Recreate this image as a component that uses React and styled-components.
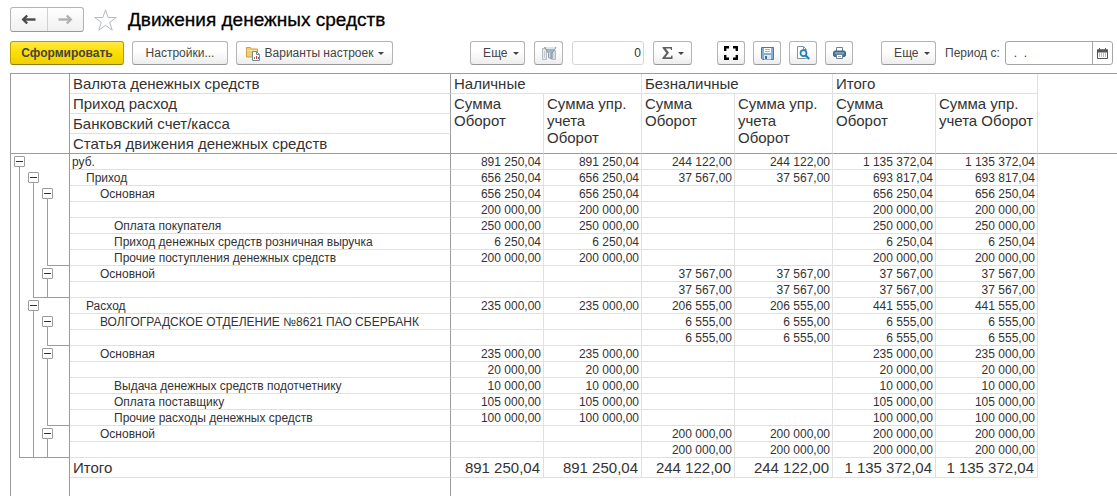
import React, { useState } from 'react'
import styled, { createGlobalStyle } from 'styled-components'

const GlobalStyle = createGlobalStyle`
    * {
        box-sizing: border-box;
    }
    body {
        margin: 0;
        background: #ffffff;
        font-family: "Liberation Sans", Arial, sans-serif;
        color: #333333;
    }
`
const Page = styled.div`
    display: flex;
    flex-direction: column;
    min-height: 100vh;
    padding-left: 10px;
`
const Header = styled.header`
    display: flex;
    align-items: center;
    gap: 9px;
    padding-top: 7px;
`
const NavGroup = styled.div`
    display: flex;
    width: 74px;
    height: 25px;
    border: 1px solid #b4b4b4;
    border-bottom-color: #979797;
    border-radius: 3px;
    background: linear-gradient(#ffffff, #f0f0f0);
`
const NavButton = styled.button`
    flex: 1;
    display: flex;
    align-items: center;
    justify-content: center;
    padding: 0;
    border: none;
    background: transparent;
    color: ${(props) => (props.disabled ? '#b0b0b0' : '#4a4a4a')};

    & + & {
        border-left: 1px solid #d0d0d0;
    }
`
const StarButton = styled.button`
    display: flex;
    padding: 0;
    border: none;
    background: transparent;
`
const Title = styled.h1`
    margin: 0;
    padding-left: 1px;
    font-size: 19px;
    line-height: 24px;
    font-weight: 400;
    color: #000000;
    -webkit-text-stroke: 0.3px #000000;
`
const Toolbar = styled.div`
    display: flex;
    align-items: center;
    padding: 9px 4px 8px 0;
`
const Group = styled.div`
    display: flex;
    flex-shrink: 0;
    align-items: center;
    gap: ${(props) => props.$gap || 8}px;
    margin-left: ${(props) => props.$before || 0}px;
`
const Button = styled.button`
    display: flex;
    align-items: center;
    justify-content: center;
    gap: 4px;
    width: ${(props) => props.$width}px;
    height: 24px;
    padding: 0;
    border: 1px solid #b4b4b4;
    border-bottom-color: #979797;
    border-radius: 3px;
    background: linear-gradient(#ffffff 40%, #ededed);
    font-family: inherit;
    font-size: 12px;
    color: #444444;
    white-space: nowrap;
`
const PrimaryButton = styled(Button)`
    border-color: #b5a000;
    border-bottom-color: #8f7e00;
    background: linear-gradient(#ffe94a, #ffdf00 45%, #efcf00);
    font-weight: 700;
`
const Caret = styled.span`
    margin-left: 1px;
    border: 3px solid transparent;
    border-top-color: #444444;
    border-bottom: none;
`
const NumberInput = styled.input`
    width: 72px;
    height: 24px;
    padding: 0 2px;
    border: 1px solid #d5d5d5;
    border-radius: 3px;
    font-family: inherit;
    font-size: 12px;
    color: #333333;
    text-align: right;
`
const PeriodLabel = styled.label`
    margin-left: 9px;
    font-size: 12px;
    color: #444444;
    white-space: nowrap;
`
const PeriodField = styled.div`
    flex: 1;
    display: flex;
    min-width: 0;
    height: 24px;
    margin-left: 5px;
    border: 1px solid #a5a5a5;
    border-radius: 3px;
`
const PeriodInput = styled.input`
    flex: 1;
    min-width: 0;
    padding: 0 8px;
    border: none;
    background: transparent;
    font-family: inherit;
    font-size: 12px;
    color: #333333;
`
const CalendarButton = styled.button`
    display: flex;
    flex-shrink: 0;
    align-items: center;
    justify-content: center;
    width: 20px;
    padding: 0;
    border: none;
    border-left: 1px solid #a5a5a5;
    background: transparent;
`

const Sheet = styled.main`
    flex: 1;
    display: flex;
    flex-direction: column;
    border-top: 1px solid #9c9c9c;
    border-left: 1px solid #9c9c9c;
`
const Table = styled.table`
    width: 100%;
    table-layout: fixed;
    border-collapse: separate;
    border-spacing: 0;
`
const HeadCell = styled.th`
    height: 20px;
    padding: 1px 3px 0;
    border-right: 1px solid ${(props) => (props.$dark ? '#9c9c9c' : '#e0e0e0')};
    border-bottom: 1px solid ${(props) => (props.$last ? '#9c9c9c' : '#e0e0e0')};
    font-size: 15px;
    line-height: 17px;
    font-weight: 400;
    text-align: left;
    vertical-align: top;
`
const HeadRest = styled.td`
    padding: 0;
    border-bottom: 1px solid #9c9c9c;
`
const TreeCell = styled.td`
    height: ${(props) => props.$height || 16}px;
    padding: 0 0 0 1px;
    border-right: 1px solid #9c9c9c;
`
const TreeSlots = styled.div`
    display: flex;
    height: 16px;
`
const Slot = styled.div`
    display: grid;
    grid-template-columns: 7px 1fr;
    flex: ${(props) => (props.$last ? '1' : '0 0 14px')};
    height: 16px;
`
const SlotLeft = styled.span`
    border-bottom: ${(props) => (props.$closed ? '1px solid #9c9c9c' : 'none')};
`
const SlotRight = styled.span`
    border-left: ${(props) => (props.$line ? '1px solid #9c9c9c' : 'none')};
    border-bottom: ${(props) => (props.$closed ? '1px solid #9c9c9c' : 'none')};
`
const NodeSlot = styled.div`
    display: flex;
    flex-direction: column;
    align-items: center;
    width: 15px;
    height: 16px;
    margin-right: -1px;
    padding-top: 2px;
`
const Toggle = styled.button`
    display: flex;
    align-items: center;
    justify-content: center;
    width: 11px;
    height: 11px;
    padding: 0;
    border: 1px solid #9c9c9c;
    border-radius: 1px;
    background: #ffffff;
`
const Minus = styled.span`
    width: 7px;
    height: 1px;
    background: #333333;
`
const Stem = styled.span`
    flex: 1;
    width: 1px;
    background: #9c9c9c;
`
const LabelCell = styled.th`
    padding: 1px 2px 0 ${(props) => 2 + props.$level * 14}px;
    border-right: 1px solid #9c9c9c;
    border-bottom: 1px solid #e0e0e0;
    font-size: 12px;
    line-height: 14px;
    font-weight: 400;
    text-align: left;
    white-space: nowrap;
`
const NumberCell = styled.td`
    padding: 1px 2px 0 0;
    border-right: 1px solid #e0e0e0;
    border-bottom: 1px solid #e0e0e0;
    font-size: 12px;
    line-height: 14px;
    text-align: right;
    white-space: nowrap;
`
const TotalLabel = styled(LabelCell)`
    padding-left: 3px;
    font-size: 15px;
    line-height: 18px;
`
const TotalNumber = styled(NumberCell)`
    padding-right: 3px;
    font-size: 15px;
    line-height: 18px;
`
const Tail = styled.div`
    flex: 1;
    display: grid;
    grid-template-columns: 59px 381px 1fr;
`
const TailCell = styled.div`
    border-right: 1px solid #9c9c9c;
`

const columnWidths = [59, 381, 93, 98, 93, 98, 103, 102]

const dimensions = ['Приход расход', 'Банковский счет/касса', 'Статья движения денежных средств']

// level 0-2 are groups, level 3 are the detail rows
// sums: [cash, non-cash, total]
const rows = [
    { level: 0, label: 'руб.', sums: ['891 250,04', '244 122,00', '1 135 372,04'] },
    { level: 1, label: 'Приход', sums: ['656 250,04', '37 567,00', '693 817,04'] },
    { level: 2, label: 'Основная', sums: ['656 250,04', '', '656 250,04'] },
    { level: 3, label: '', sums: ['200 000,00', '', '200 000,00'] },
    { level: 3, label: 'Оплата покупателя', sums: ['250 000,00', '', '250 000,00'] },
    { level: 3, label: 'Приход денежных средств розничная выручка', sums: ['6 250,04', '', '6 250,04'] },
    { level: 3, label: 'Прочие поступления денежных средств', sums: ['200 000,00', '', '200 000,00'] },
    { level: 2, label: 'Основной', sums: ['', '37 567,00', '37 567,00'] },
    { level: 3, label: '', sums: ['', '37 567,00', '37 567,00'] },
    { level: 1, label: 'Расход', sums: ['235 000,00', '206 555,00', '441 555,00'] },
    { level: 2, label: 'ВОЛГОГРАДСКОЕ ОТДЕЛЕНИЕ №8621 ПАО СБЕРБАНК', sums: ['', '6 555,00', '6 555,00'] },
    { level: 3, label: '', sums: ['', '6 555,00', '6 555,00'] },
    { level: 2, label: 'Основная', sums: ['235 000,00', '', '235 000,00'] },
    { level: 3, label: '', sums: ['20 000,00', '', '20 000,00'] },
    { level: 3, label: 'Выдача денежных средств подотчетнику', sums: ['10 000,00', '', '10 000,00'] },
    { level: 3, label: 'Оплата поставщику', sums: ['105 000,00', '', '105 000,00'] },
    { level: 3, label: 'Прочие расходы денежных средств', sums: ['100 000,00', '', '100 000,00'] },
    { level: 2, label: 'Основной', sums: ['', '200 000,00', '200 000,00'] },
    { level: 3, label: '', sums: ['', '200 000,00', '200 000,00'] },
]

const totals = ['891 250,04', '244 122,00', '1 135 372,04']

// every sum is shown twice: the plain one and the management accounting one
const double = (sums) => sums.flatMap((sum) => [sum, sum])

const ArrowIcon = ({ flip }) => (
    <svg width="15" height="11" viewBox="0 0 15 11">
        <g transform={flip ? 'matrix(-1 0 0 1 15 0)' : undefined} fill="none" stroke="currentColor" strokeWidth="2.4">
            <path d="M2 5.5H14.5" />
            <path d="M6.2 1.5L2.2 5.5l4 4" />
        </g>
    </svg>
)

const StarIcon = () => (
    <svg width="25" height="24" viewBox="0 0 25 24">
        <path
            d="M12.5 1.8l2.6 7.7h8.2l-6.6 4.9 2.5 7.8-6.7-4.8-6.7 4.8 2.5-7.8-6.6-4.9h8.2z"
            fill="#ffffff" stroke="#b4bac1" />
    </svg>
)

const VariantsIcon = () => (
    <svg width="16" height="16" viewBox="0 0 16 16">
        <path d="M1.5 2.5h4l1 1.5h6v8h-11z" fill="#f2cb73" stroke="#cf9f45" />
        <path d="M2 5.5h10" stroke="#fbe3a0" />
        <path d="M7.5 6.5h4l3 3v6h-7z" fill="#ffffff" stroke="#7a8796" />
        <path d="M11.5 6.5v3h3" fill="none" stroke="#7a8796" />
        <path d="M9.5 14v-2" stroke="#4d9b53" />
        <path d="M11.5 14v-3" stroke="#d0453a" />
        <path d="M13.5 14v-2" stroke="#4b7fb5" />
    </svg>
)

const FilterIcon = () => (
    <svg width="16" height="16" viewBox="0 0 16 16">
        <path d="M1.5 3.5h4v11h-4z" fill="#e6eaed" stroke="#b3bcc4" />
        <path d="M11.5 5.5h3v9h-3z" fill="#d5dbe0" stroke="#b3bcc4" />
        <path d="M3.500 6v7" stroke="#c3cad1" />
        <path d="M3.500 2.500h11.500L10.800 8.500v5.500l-3.300-1.500V8.500z" fill="#a3b2bf" stroke="#8b9aa8" />
        <path d="M4.500 2h10l-1 2h-8z" fill="#dde4ea" />
        <path d="M8.500 7.500v5" stroke="#d3dce4" />
    </svg>
)

const SigmaIcon = () => (
    <svg width="11" height="12" viewBox="0 0 11 12">
        <path d="M0.500 0h9.500v3H9L8.500 1.600H3.800L7 5.700 3.400 10.200h5.300L9.500 8.600h1V12H0.300v-1L4.300 6 0.500 1z" fill="#606060" />
    </svg>
)

const ExpandIcon = () => (
    <svg width="14" height="14" viewBox="0 0 14 14" fill="none" stroke="#000000" strokeWidth="2.4">
        <path d="M1.200 5V1.200H5M9 1.200h3.800V5M12.800 9v3.800H9M5 12.800H1.200V9" />
    </svg>
)

const SaveIcon = () => (
    <svg width="13" height="13" viewBox="0 0 13 13">
        <path d="M0.500 0.500h12v12h-11l-1-1z" fill="#86afd8" stroke="#4a78a8" />
        <path d="M3 1h7v5H3z" fill="#ffffff" />
        <path d="M4 2.500h5M4 4.500h5" stroke="#9fb4c8" />
        <path d="M3 8h7v4.500H3z" fill="#dbe7f2" />
        <path d="M4 9h2v3H4z" fill="#3f6f9f" />
    </svg>
)

const PreviewIcon = () => (
    <svg width="14" height="14" viewBox="0 0 14 14" fill="none">
        <path d="M10.500 12.500h-9v-12h6l3 3" fill="#ffffff" stroke="#7f93a6" />
        <path d="M7.500 0.500v3h3" stroke="#7f93a6" />
        <circle cx="7.500" cy="7.200" r="3" fill="#e6f3fa" stroke="#2480b3" strokeWidth="1.700" />
        <path d="M9.700 9.500l3.500 3.500" stroke="#2480b3" strokeWidth="2.200" />
    </svg>
)

const PrintIcon = () => (
    <svg width="13" height="12" viewBox="0 0 13 12">
        <path d="M3.500 4V0.500h6V4" fill="#ffffff" stroke="#6d8296" />
        <rect x="0.500" y="4" width="12" height="5.500" rx="1.500" fill="#4f7497" stroke="#3e607f" />
        <path d="M2 6h9" stroke="#a9c0d5" />
        <path d="M3.500 7.500h6v4h-6z" fill="#ffffff" stroke="#6d8296" />
        <path d="M5 9.500h3" stroke="#9aabba" />
    </svg>
)

const CalendarIcon = () => (
    <svg width="11" height="11" viewBox="0 0 11 11">
        <path d="M0.500 2h10v8.500h-10z" fill="#ffffff" stroke="#555555" />
        <path d="M0 1.500h11V4.500H0z" fill="#555555" />
        <path d="M2.500 0v3M8.500 0v3" stroke="#555555" />
        <path d="M2 6h7M2 8h7" stroke="#777777" strokeDasharray="1 1" />
    </svg>
)

const MoreButton = () => (
    <Button $width={55}>
        &nbsp;&nbsp;Еще
        <Caret />
    </Button>
)

const TreeBranch = ({ level, nextLevel }) => (
    <TreeSlots>
        {[0, 1, 2].map((slot) => {
            if (slot === level) {
                return (
                    <NodeSlot key={slot}>
                        <Toggle aria-label="Свернуть группу"><Minus /></Toggle>
                        <Stem />
                    </NodeSlot>
                )
            }
            const closing = level > nextLevel
            return (
                <Slot key={slot} $last={slot === 2}>
                    <SlotLeft $closed={closing && slot > nextLevel} />
                    <SlotRight $line={slot < level} $closed={closing && slot >= nextLevel} />
                </Slot>
            )
        })}
    </TreeSlots>
)

const Report = () => (
    <Sheet>
        <Table>
            <colgroup>
                {columnWidths.map((width, i) => <col key={i} width={width} />)}
                <col />
            </colgroup>
            <thead>
                <tr>
                    <HeadCell as="td" rowSpan={4} $dark $last />
                    <HeadCell $dark>Валюта денежных средств</HeadCell>
                    <HeadCell colSpan={2}>Наличные</HeadCell>
                    <HeadCell colSpan={2}>Безналичные</HeadCell>
                    <HeadCell colSpan={2}>Итого</HeadCell>
                    <HeadRest rowSpan={4} />
                </tr>
                {dimensions.map((name, i) => (
                    <tr key={name}>
                        <HeadCell $dark $last={i === 2}>{name}</HeadCell>
                        {i === 0 && [0, 1, 2].map((group) => (
                            <React.Fragment key={group}>
                                <HeadCell rowSpan={3} $last>Сумма Оборот</HeadCell>
                                <HeadCell rowSpan={3} $last>Сумма упр. учета Оборот</HeadCell>
                            </React.Fragment>
                        ))}
                    </tr>
                ))}
            </thead>
            <tbody>
                {rows.map((row, i) => (
                    <tr key={i}>
                        <TreeCell>
                            <TreeBranch level={row.level} nextLevel={i + 1 < rows.length ? rows[i + 1].level : 0} />
                        </TreeCell>
                        <LabelCell scope="row" $level={row.level}>{row.label}</LabelCell>
                        {double(row.sums).map((sum, j) => <NumberCell key={j}>{sum}</NumberCell>)}
                        <td />
                    </tr>
                ))}
            </tbody>
            <tfoot>
                <tr>
                    <TreeCell $height={20} />
                    <TotalLabel scope="row" $level={0}>Итого</TotalLabel>
                    {double(totals).map((sum, j) => <TotalNumber key={j}>{sum}</TotalNumber>)}
                    <td />
                </tr>
            </tfoot>
        </Table>
        <Tail>
            <TailCell />
            <TailCell />
        </Tail>
    </Sheet>
)

const App = () => {

    const [amount, setAmount] = useState('0')
    const [period, setPeriod] = useState('.  .')

    return (
        <Page>
            <GlobalStyle />
            <Header>
                <NavGroup>
                    <NavButton aria-label="Назад"><ArrowIcon /></NavButton>
                    <NavButton aria-label="Вперед" disabled><ArrowIcon flip /></NavButton>
                </NavGroup>
                <StarButton aria-label="В избранное"><StarIcon /></StarButton>
                <Title>Движения денежных средств</Title>
            </Header>
            <Toolbar>
                <Group>
                    <PrimaryButton $width={114}>Сформировать</PrimaryButton>
                    <Button $width={96}>Настройки...</Button>
                    <Button $width={157}>
                        <VariantsIcon />
                        Варианты настроек
                        <Caret />
                    </Button>
                </Group>
                <Group $before={77} $gap={9}>
                    <MoreButton />
                    <Button $width={29} aria-label="Отбор"><FilterIcon /></Button>
                    <NumberInput
                        aria-label="Сумма выделенных ячеек"
                        value={amount}
                        onChange={(e) => setAmount(e.target.value)} />
                    <Button $width={39} aria-label="Итоги"><SigmaIcon /><Caret /></Button>
                </Group>
                <Group $before={25}>
                    <Button $width={28} aria-label="Развернуть"><ExpandIcon /></Button>
                    <Button $width={28} aria-label="Сохранить"><SaveIcon /></Button>
                    <Button $width={28} aria-label="Просмотр"><PreviewIcon /></Button>
                    <Button $width={28} aria-label="Печать"><PrintIcon /></Button>
                </Group>
                <Group $before={28}>
                    <MoreButton />
                </Group>
                <PeriodLabel htmlFor="period">Период с:</PeriodLabel>
                <PeriodField>
                    <PeriodInput id="period" value={period} onChange={(e) => setPeriod(e.target.value)} />
                    <CalendarButton aria-label="Выбрать дату"><CalendarIcon /></CalendarButton>
                </PeriodField>
            </Toolbar>
            <Report />
        </Page>
    )
}

export default App
